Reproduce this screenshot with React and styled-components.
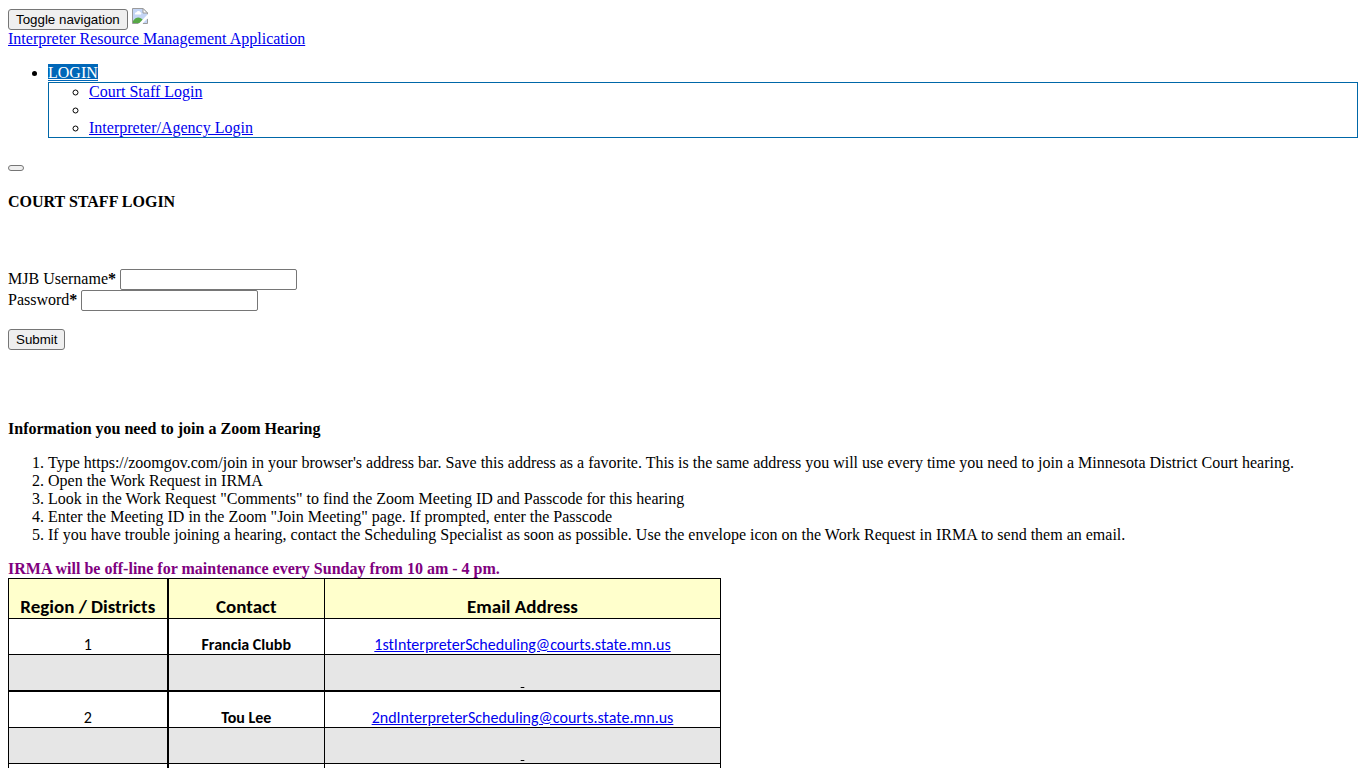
import React from "react";
import styled, { createGlobalStyle } from "styled-components";

const GlobalStyle = createGlobalStyle`
  body {
    margin: 8px;
    background: #fff;
    color: #000;
    font-family: "Liberation Serif", "Times New Roman", serif;
    font-size: 16px;
    line-height: 18px;
  }
`;

const Link = styled.a`
  color: #0000ee;
  text-decoration: underline;
`;

const Button = styled.button`
  height: 21px;
  padding: 0 7px;
  border: 1px solid #767676;
  border-radius: 3px;
  background: #efefef;
  color: #000;
  font-family: "Liberation Sans", Arial, sans-serif;
  font-size: smaller;
  line-height: 19px;
`;

const SmallButton = styled(Button)`
  display: block;
  width: 16px;
  height: 6px;
  padding: 0;
`;

const TopBar = styled.div`
  display: flex;
  align-items: flex-end;
  gap: 4px;
  height: 22px;
`;

const LogoIcon = styled.svg`
  width: 16px;
  height: 16px;
  margin-bottom: 6px;
`;

const Menu = styled.ul`
  margin: 16px 0 27px;
  padding-left: 40px;
  list-style: disc;
`;

const MenuLink = styled(Link)`
  background: #0067b8;
  color: #fff;
`;

const SubMenu = styled.ul`
  margin: 0;
  padding-left: 40px;
  border: 1px solid #0067a8;
  list-style: circle;
`;

const SubItem = styled.li`
  height: 18px;
`;

const Title = styled.h4`
  margin: 22px 0 58px;
  font-size: 16px;
  font-weight: 700;
`;

const Form = styled.form`
  margin-bottom: 70px;
`;

const Field = styled.div`
  display: flex;
  align-items: flex-start;
  gap: 4px;
  height: 21px;
`;

const Label = styled.label`
  line-height: 20px;
`;

const Input = styled.input`
  box-sizing: border-box;
  width: 177px;
  height: 21px;
  padding: 1px 2px;
  border: 1px solid #767676;
  border-radius: 2px;
  background: #fff;
  font-size: 13px;
`;

const Submit = styled(Button)`
  display: block;
  margin-top: 18px;
`;

const InfoTitle = styled.h4`
  margin: 0 0 16px;
  font-size: 16px;
`;

const Steps = styled.ol`
  margin: 0 0 16px;
  padding-left: 40px;
`;

const Notice = styled.strong`
  display: block;
  color: #800080;
`;

const Table = styled.table`
  width: 713px;
  border-collapse: collapse;
  table-layout: fixed;
  font-family: Calibri, Carlito, Lato, sans-serif;
  font-size: 16px;
  text-align: center;
`;

const Col = styled.col`
  width: ${(props) => props.$width};
`;

const Th = styled.th`
  height: 40px;
  box-sizing: border-box;
  padding: 0;
  border: 1px solid #000;
  background: #ffffcc;
  font-size: 19px;
  line-height: 22px;
  vertical-align: bottom;

  &:first-child {
    border-right-width: 2px;
  }
`;

const Row = styled.tr`
  background: ${(props) => (props.$shaded ? "#e6e6e6" : "#fff")};
`;

const Td = styled.td`
  height: ${(props) => (props.$divided ? "37px" : "36px")};
  box-sizing: border-box;
  padding: 0;
  border: 1px solid #000;
  border-top-width: ${(props) => (props.$divided ? "2px" : "1px")};
  font-weight: ${(props) => (props.$bold ? 700 : 400)};
  vertical-align: bottom;

  &:first-child {
    border-right-width: 2px;
  }
`;

const contacts = [
  {
    district: "1",
    name: "Francia Clubb",
    email: "1stInterpreterScheduling@courts.state.mn.us",
  },
  {
    district: "2",
    name: "Tou Lee",
    email: "2ndInterpreterScheduling@courts.state.mn.us",
    divided: true,
  },
];

function BrokenImage() {
  return (
    <LogoIcon viewBox="0 0 16 16" role="img" aria-label="Logo">
      <path d="M0.5 0.5H11L15.5 5V15.5H0.5Z" fill="#c4d5f5" />
      <path d="M3 6.5a1.6 1.6 0 0 1 1.5-2.3 2.2 2.2 0 0 1 4 0A1.5 1.5 0 0 1 9 6.5Z" fill="#fff" />
      <path d="M1 15V13C4 8.5 8 8.5 11 12L9 15Z" fill="#57a846" />
      <path d="M6.5 15.5H0.5V0.5H11L15.5 5V6.5M15.5 11V15.5H11" fill="none" stroke="#9b9b9b" />
      <path d="M16 6L6.5 16H10L16 10Z" fill="#fff" />
      <path d="M11 0.5V5H15.5Z" fill="#fff" stroke="#9b9b9b" />
    </LogoIcon>
  );
}

function Navigation() {
  return (
    <nav>
      <TopBar>
        <Button type="button">Toggle navigation</Button>
        <BrokenImage />
      </TopBar>
      <Link href="#home">Interpreter Resource Management Application</Link>
      <Menu>
        <li>
          <MenuLink href="#login">LOGIN</MenuLink>
          <SubMenu>
            <SubItem>
              <Link href="#staff">Court Staff Login</Link>
            </SubItem>
            <SubItem />
            <SubItem>
              <Link href="#agency">Interpreter/Agency Login</Link>
            </SubItem>
          </SubMenu>
        </li>
      </Menu>
    </nav>
  );
}

function LoginForm() {
  return (
    <Form onSubmit={(e) => e.preventDefault()}>
      <Field>
        <Label htmlFor="username">
          MJB Username<b>*</b>
        </Label>
        <Input id="username" type="text" />
      </Field>
      <Field>
        <Label htmlFor="password">
          Password<b>*</b>
        </Label>
        <Input id="password" type="password" />
      </Field>
      <Submit type="submit">Submit</Submit>
    </Form>
  );
}

function ContactTable() {
  return (
    <Table>
      <colgroup>
        <Col $width="159px" />
        <Col $width="157px" />
        <Col $width="396px" />
      </colgroup>
      <thead>
        <tr>
          <Th scope="col">Region / Districts</Th>
          <Th scope="col">Contact</Th>
          <Th scope="col">Email Address</Th>
        </tr>
      </thead>
      <tbody>
        {contacts.map((contact) => (
          <React.Fragment key={contact.district}>
            <Row>
              <Td $divided={contact.divided}>{contact.district}</Td>
              <Td $divided={contact.divided} $bold>
                {contact.name}
              </Td>
              <Td $divided={contact.divided}>
                <Link href={`mailto:${contact.email}`}>{contact.email}</Link>
              </Td>
            </Row>
            <Row $shaded>
              <Td />
              <Td />
              <Td>
                <u>&nbsp;</u>
              </Td>
            </Row>
          </React.Fragment>
        ))}
        <Row>
          <Td />
          <Td />
          <Td />
        </Row>
      </tbody>
    </Table>
  );
}

function App() {
  return (
    <>
      <GlobalStyle />
      <Navigation />
      <main>
        <SmallButton type="button" aria-label="Close" />
        <Title>COURT STAFF LOGIN</Title>
        <LoginForm />
        <InfoTitle>Information you need to join a Zoom Hearing</InfoTitle>
        <Steps>
          <li>
            Type https://zoomgov.com/join in your browser's address bar. Save
            this address as a favorite. This is the same address you will use
            every time you need to join a Minnesota District Court hearing.
          </li>
          <li>Open the Work Request in IRMA</li>
          <li>
            Look in the Work Request "Comments" to find the Zoom Meeting ID and
            Passcode for this hearing
          </li>
          <li>
            Enter the Meeting ID in the Zoom "Join Meeting" page. If prompted,
            enter the Passcode
          </li>
          <li>
            If you have trouble joining a hearing, contact the Scheduling
            Specialist as soon as possible. Use the envelope icon on the Work
            Request in IRMA to send them an email.
          </li>
        </Steps>
        <Notice>
          IRMA will be off-line for maintenance every Sunday from 10 am - 4 pm.
        </Notice>
        <ContactTable />
      </main>
    </>
  );
}

export default App;
